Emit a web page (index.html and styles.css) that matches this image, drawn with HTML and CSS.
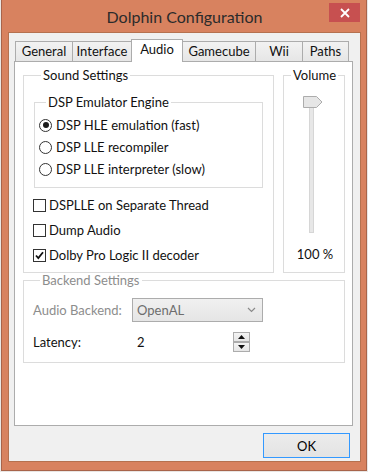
FILE: index.html
```html
<!DOCTYPE html>
<html>
<head>
<meta charset="utf-8">
<link rel="stylesheet" href="styles.css">
</head>
<body>
<div class="window">
  <div class="titlebar">
    <div class="title">Dolphin Configuration</div>
    <div class="close">
      <svg width="10" height="10" viewBox="0 0 10 10"><path d="M1 1 L9 9 M9 1 L1 9" stroke="#fff" stroke-width="1.8" fill="none"/></svg>
    </div>
  </div>
  <div class="client">
    <div class="tabs">
      <div class="tab t-general">General</div>
      <div class="tab t-interface">Interface</div>
      <div class="tab t-audio selected">Audio</div>
      <div class="tab t-gamecube">Gamecube</div>
      <div class="tab t-wii">Wii</div>
      <div class="tab t-paths">Paths</div>
    </div>
    <div class="panel">
      <div class="top-row">
        <fieldset class="group sound">
          <legend>Sound Settings</legend>
          <fieldset class="group dsp">
            <legend>DSP Emulator Engine</legend>
            <div class="opt"><span class="radio checked"></span><span>DSP HLE emulation (fast)</span></div>
            <div class="opt"><span class="radio"></span><span>DSP LLE recompiler</span></div>
            <div class="opt"><span class="radio"></span><span>DSP LLE interpreter (slow)</span></div>
          </fieldset>
          <div class="checks">
            <div class="opt chk"><span class="checkbox"></span><span>DSPLLE on Separate Thread</span></div>
            <div class="opt chk"><span class="checkbox"></span><span>Dump Audio</span></div>
            <div class="opt chk"><span class="checkbox"><svg width="11" height="11" viewBox="0 0 11 11"><path d="M2 5.5 L4.3 8 L9 2.2" stroke="#111" stroke-width="1.8" fill="none"/></svg></span><span>Dolby Pro Logic II decoder</span></div>
          </div>
        </fieldset>
        <fieldset class="group volume">
          <legend>Volume</legend>
          <div class="slider">
            <div class="track"></div>
            <svg class="thumb" width="20" height="12" viewBox="0 0 20 12"><path d="M0.5 0.5 H13.5 L19 6 L13.5 11.5 H0.5 Z" fill="#e6e6e6" stroke="#acacac"/></svg>
          </div>
          <div class="vol-value">100 %</div>
        </fieldset>
      </div>
      <fieldset class="group backend">
        <legend>Backend Settings</legend>
        <div class="row">
          <span class="label disabled">Audio Backend:</span>
          <div class="combo">
            <span>OpenAL</span>
            <svg width="9" height="6" viewBox="0 0 9 6"><path d="M1 1 L4.5 4.5 L8 1" stroke="#8a8a8a" stroke-width="1.2" fill="none"/></svg>
          </div>
        </div>
        <div class="row row2">
          <span class="label">Latency:</span>
          <span class="spin-value">2</span>
          <div class="spin">
            <div class="spin-btn"><svg width="7" height="4" viewBox="0 0 7 4"><path d="M0 4 L3.5 0 L7 4 Z" fill="#111"/></svg></div>
            <div class="spin-btn"><svg width="7" height="4" viewBox="0 0 7 4"><path d="M0 0 L3.5 4 L7 0 Z" fill="#111"/></svg></div>
          </div>
        </div>
      </fieldset>
    </div>
    <div class="buttons">
      <button class="ok">OK</button>
    </div>
  </div>
</div>
</body>
</html>
```

FILE: styles.css
```css
* { box-sizing: border-box; }
html, body { margin: 0; padding: 0; }
body {
  width: 368px;
  height: 472px;
  background: #e9e6e4;
  font-family: Lato, "Liberation Sans", sans-serif;
  font-size: 13px;
  color: #111;
  overflow: hidden;
}
.window {
  margin-left: 1px;
  width: 366px;
  height: 471px;
  background: #d8825f;
  border: 1px solid #a8644a;
  border-top: none;
  padding: 0 5px 8px 6px;
  display: flex;
  flex-direction: column;
}
.titlebar {
  height: 32px;
  display: grid;
  grid-template-columns: 1fr auto 1fr;
  align-items: start;
}
.title {
  grid-column: 2;
  font-size: 16px;
  color: #2b2b2b;
  line-height: 20px;
  margin-top: 7px;
}
.close {
  grid-column: 3;
  justify-self: end;
  margin-right: 1px;
  margin-top: 3px;
  width: 31px;
  height: 19px;
  background: #c75050;
  display: flex;
  align-items: center;
  justify-content: center;
}
.client {
  flex: 1;
  background: #f0f0f0;
  border: 1px solid #b5714f;
  padding: 6px 7px 0 5px;
  display: flex;
  flex-direction: column;
}
.tabs {
  display: flex;
  align-items: flex-end;
  height: 22px;
  margin-left: 1px;
}
.tab {
  height: 20px;
  margin-right: -1px;
  border: 1px solid #acacac;
  border-bottom: none;
  background: linear-gradient(#f2f2f2, #e6e6e6);
  text-align: center;
  line-height: 18px;
  white-space: nowrap;
}
.tab.selected {
  height: 23px;
  margin-bottom: -1px;
  background: #fff;
  position: relative;
  z-index: 1;
  line-height: 19px;
}
.t-general { width: 58px; }
.t-interface { width: 60px; }
.t-audio { width: 52px; }
.t-gamecube { width: 74px; }
.t-wii { width: 48px; }
.t-paths { width: 47px; }
.panel {
  height: 365px;
  background: #fff;
  border: 1px solid #acacac;
  padding: 6px 7px 0 8px;
}
.top-row {
  display: flex;
  gap: 9px;
}
fieldset.group {
  margin: 0;
  border: 1px solid #dcdcdc;
  min-width: 0;
}
fieldset.group > legend {
  padding: 0 2px;
  margin-left: 7px;
  line-height: 15px;
  height: 15px;
}
.sound {
  width: 251px;
  height: 205px;
  padding: 12px 10px 3px 10px;
}
.dsp {
  padding: 4px 4px 7px 4px;
}
.dsp > legend { margin-left: 5px; }
.opt {
  display: flex;
  align-items: center;
  height: 22px;
  white-space: nowrap;
}
.radio {
  width: 13px;
  height: 13px;
  border: 1px solid #333;
  border-radius: 50%;
  background: #fff;
  margin-right: 4px;
  display: flex;
  align-items: center;
  justify-content: center;
  flex: none;
}
.radio.checked::after {
  content: "";
  width: 6px;
  height: 6px;
  border-radius: 50%;
  background: #1a1a1a;
}
.checks {
  margin-top: 5px;
  display: flex;
  flex-direction: column;
  gap: 1px;
}
.opt.chk { height: 24px; }
.checkbox {
  width: 13px;
  height: 13px;
  border: 1px solid #333;
  background: #fff;
  margin-left: -1px;
  margin-right: 3px;
  flex: none;
  display: flex;
  align-items: center;
  justify-content: center;
}
.volume {
  width: 62px;
  height: 205px;
  padding: 13px 0 0 0;
}
.slider {
  position: relative;
  height: 138px;
}
.track {
  margin-left: 25px;
  width: 5px;
  height: 137px;
  background: #e7e7e7;
  border: 1px solid #d6d6d6;
}
.thumb {
  position: absolute;
  left: 19px;
  top: 0;
}
.vol-value {
  margin-top: 12px;
  text-align: center;
  padding-left: 2px;
  line-height: 16px;
}
.backend {
  margin-top: 10px;
  width: 322px;
  padding: 10px 9px 9px 9px;
}
.backend > legend { color: #8d8d8d; }
.row {
  display: flex;
  align-items: center;
  height: 24px;
}
.row2 {
  margin-top: 9px;
  height: 22px;
}
.label { width: 99px; flex: none; }
.label.disabled { color: #8d8d8d; }
.combo {
  width: 131px;
  height: 24px;
  border: 1px solid #acacac;
  background: linear-gradient(#f0f0f0, #e5e5e5);
  display: flex;
  align-items: center;
  justify-content: space-between;
  padding: 0 6px 0 4px;
  color: #6d6d6d;
}
.spin-value {
  width: 101px;
  padding-left: 5px;
  flex: none;
}
.spin {
  width: 17px;
  display: flex;
  flex-direction: column;
}
.spin-btn {
  height: 10px;
  border: 1px solid #acacac;
  background: linear-gradient(#f4f4f4, #e6e6e6);
  display: flex;
  align-items: center;
  justify-content: center;
}
.buttons {
  display: flex;
  justify-content: flex-end;
  padding-top: 7px;
  padding-right: 3px;
}
.ok {
  width: 87px;
  height: 25px;
  border: 1px solid #3399ff;
  background: linear-gradient(#ececec, #e3e3e3);
  font-family: Lato, "Liberation Sans", sans-serif;
  font-size: 13px;
  color: #000;
  padding: 0;
}
```
